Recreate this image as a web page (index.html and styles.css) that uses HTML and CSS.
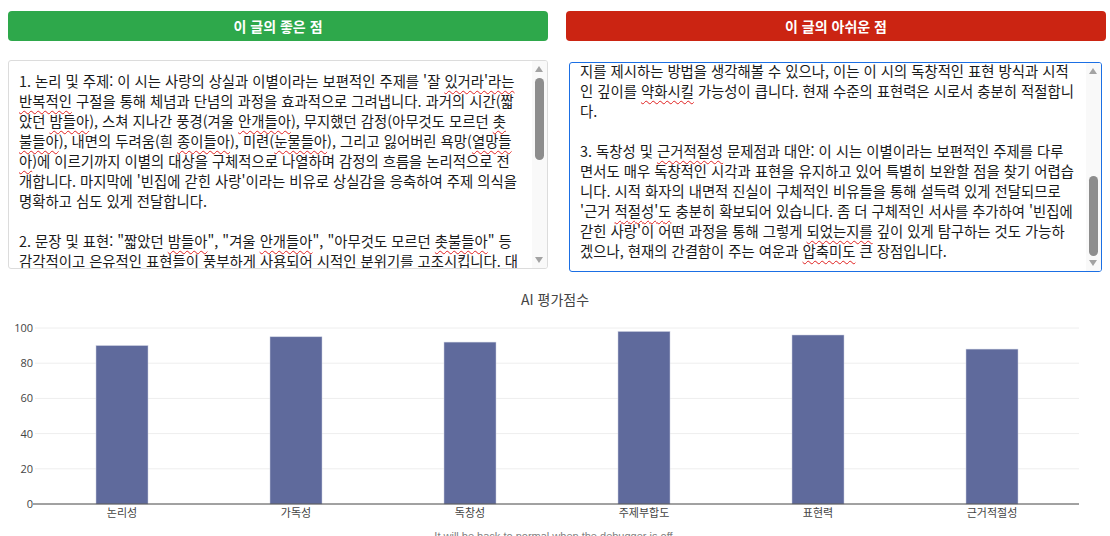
FILE: index.html
```html
<!DOCTYPE html>
<html lang="ko">
<head>
    <meta charset="UTF-8">
    <meta name="viewport" content="width=device-width, initial-scale=1.0">
    <title>AI 시 평가</title>
    <link rel="stylesheet" href="styles.css">
</head>
<body>

<div class="panels">
    <section class="panel">
        <div class="panel-head good">이 글의 좋은 점</div>
        <div class="feedback-box">
            <div class="feedback">1. 논리 및 주제: 이 시는 사랑의 상실과 이별이라는 보편적인 주제를 '잘 <span class="typo">있거라'라는</span> <span class="typo">반복적인</span> 구절을 통해 체념과 단념의 과정을 효과적으로 그려냅니다. 과거의 시간(짧았던 <span class="typo">밤들아</span>), 스쳐 지나간 풍경(겨울 <span class="typo">안개들아</span>), 무지했던 감정(아무것도 모르던 <span class="typo">촛불들아</span>), 내면의 두려움(흰 <span class="typo">종이들아</span>), 미련(<span class="typo">눈물들아</span>), 그리고 잃어버린 욕망(<span class="typo">열망들아</span>)에 이르기까지 이별의 대상을 구체적으로 나열하며 감정의 흐름을 논리적으로 전개합니다. 마지막에 '빈집에 갇힌 사랑'이라는 비유로 상실감을 응축하여 주제 의식을 명확하고 심도 있게 전달합니다.<br><br>2. 문장 및 표현: "짧았던 <span class="typo">밤들아</span>", "겨울 <span class="typo">안개들아</span>", "아무것도 모르던 <span class="typo">촛불들아</span>" 등 감각적이고 은유적인 표현들이 풍부하게 사용되어 시적인 분위기를 고조시킵니다. 대상에게 직접 말을 거는 호격 표현과 반복되는 문장 구조는 운율감을 형성하며, 화자의 절제된 어조 속에 깊은 슬픔을 효과적으로 담아냅니다.<br><br>3. 독창성: 이별이라는 익숙한 주제를 사물과 시간에 대한 작별 인사의 형식으로 풀어낸 점이 매우 독창적입니다. 특히 '빈집'이라는 공간에 사랑을 가두는 마지막 구절은 상실의 감정을 시각적이고 공간적인 이미지로 전환하여 독자에게 강렬한 인상을 남깁니다.<br><br>4. 근거 적절성: 각 시구에 등장하는 대상들은 화자가 떠나보내는 과거의 기억과 감정을 구체적으로 뒷받침하는 근거로 기능합니다. 나열된 이미지들이 모두 '빈집에 갇힌 사랑'이라는 결론으로 자연스럽게 수렴되어 설득력을 높여줍니다.</div>
            <div class="scrollbar">
                <span class="arrow up"></span>
                <span class="thumb"></span>
                <span class="arrow down"></span>
            </div>
        </div>
    </section>
    <section class="panel">
        <div class="panel-head bad">이 글의 아쉬운 점</div>
        <div class="feedback-box active">
            <div class="feedback" id="weak-points">1. 논리 및 주제 문제점과 대안: 이 시는 '잘 있거라'라는 반복 구절을 통해 이별의 정서를 일관되게 전달하고 있어 논리적 흐름에 큰 문제점은 보이지 않습니다. 다만 나열된 대상들 사이의 연결 고리가 다소 암시적이어서 일부 독자에게는 감정의 흐름이 갑작스럽게 느껴질 수 있습니다. 예를 들어 '짧았던 밤'에서 '흰 종이'로 넘어가는 과정에서 화자가 어떤 경험을 거쳤는지가 드러나지 않아 해석의 여지가 넓게 남습니다. 각 대상이 지닌 의미를 조금 더 드러내는 방식도 고려해볼 수 있으나, 이러한 생략과 여백이 오히려 독자의 상상력을 자극하며 현재의 절제된 구성 자체가 이 시의 가장 큰 매력이기도 합니다.<br><br>2. 문장 및 표현의 문제점과 대안: 감각적이고 은유적인 표현들이 풍부하게 사용되어 있어 표현상의 뚜렷한 결함은 찾기 어렵습니다. 다만 일부 시구에서 호격 표현이 반복되어 리듬이 다소 단조롭게 느껴질 수 있습니다. 이를 보완하기 위해 선명한 이미지를 제시하는 방법을 생각해볼 수 있으나, 이는 이 시의 독창적인 표현 방식과 시적인 깊이를 <span class="typo">약화시킬</span> 가능성이 큽니다. 현재 수준의 표현력은 시로서 충분히 적절합니다.<br><br>3. 독창성 및 <span class="typo">근거적절성</span> 문제점과 대안: 이 시는 이별이라는 보편적인 주제를 다루면서도 매우 독창적인 시각과 표현을 유지하고 있어 특별히 보완할 점을 찾기 어렵습니다. 시적 화자의 내면적 진실이 구체적인 비유들을 통해 설득력 있게 전달되므로 '근거 <span class="typo">적절성'도</span> 충분히 확보되어 있습니다. 좀 더 구체적인 서사를 추가하여 '빈집에 갇힌 사랑'이 어떤 과정을 통해 그렇게 <span class="typo">되었는지를</span> 깊이 있게 탐구하는 것도 가능하겠으나, 현재의 간결함이 주는 여운과 <span class="typo">압축미도</span> 큰 장점입니다.</div>
            <div class="scrollbar">
                <span class="arrow up"></span>
                <span class="thumb"></span>
                <span class="arrow down"></span>
            </div>
        </div>
    </section>
</div>

<div class="chart">
    <div class="chart-title">AI 평가점수</div>
    <svg class="plot" width="1110" height="210" viewBox="0 0 1110 210">
        <g class="grid">
            <line x1="35" y1="19" x2="1079" y2="19"/>
            <line x1="35" y1="54.2" x2="1079" y2="54.2"/>
            <line x1="35" y1="89.4" x2="1079" y2="89.4"/>
            <line x1="35" y1="124.6" x2="1079" y2="124.6"/>
            <line x1="35" y1="159.8" x2="1079" y2="159.8"/>
        </g>
        <g class="ticks" text-anchor="end">
            <text x="33" y="23">100</text>
            <text x="33" y="58.2">80</text>
            <text x="33" y="93.4">60</text>
            <text x="33" y="128.6">40</text>
            <text x="33" y="163.8">20</text>
            <text x="33" y="199">0</text>
        </g>
        <g class="bars">
            <rect x="96" y="36.6" width="52" height="158.4"/>
            <rect x="270" y="27.8" width="52" height="167.2"/>
            <rect x="444" y="33.1" width="52" height="161.9"/>
            <rect x="618" y="22.5" width="52" height="172.5"/>
            <rect x="792" y="26" width="52" height="169"/>
            <rect x="966" y="40.1" width="52" height="154.9"/>
        </g>
        <line class="axis" x1="33" y1="195" x2="1079" y2="195"/>
        <g class="ticks" text-anchor="middle">
            <text x="122" y="208">논리성</text>
            <text x="296" y="208">가독성</text>
            <text x="470" y="208">독창성</text>
            <text x="644" y="208">주제부합도</text>
            <text x="818" y="208">표현력</text>
            <text x="992" y="208">근거적절성</text>
        </g>
    </svg>
</div>

<p class="debug-note">It will be back to normal when the debugger is off.</p>

<script>
    let weakPoints = document.getElementById('weak-points');
    weakPoints.scrollTop = weakPoints.scrollHeight;

    // draw the scroll thumbs from the real scroll position
    document.querySelectorAll('.feedback-box').forEach(box => {
        let text = box.querySelector('.feedback');
        let thumb = box.querySelector('.thumb');
        let trackTop = 17;
        let trackLength = text.clientHeight - trackTop - 15;
        let thumbHeight = Math.round(trackLength * text.clientHeight / text.scrollHeight);
        let maxScroll = text.scrollHeight - text.clientHeight;
        let offset = maxScroll > 0 ? (trackLength - thumbHeight) * text.scrollTop / maxScroll : 0;
        thumb.style.top = (trackTop + Math.round(offset)) + 'px';
        thumb.style.height = thumbHeight + 'px';
    });
</script>

</body>
</html>
```

FILE: styles.css
```css
body {
    font-family: "Noto Sans CJK KR", "Noto Sans", sans-serif;
    margin: 0;
    padding: 0;
    background-color: white;
    color: #1a1a1a;
    overflow: hidden;
}
.panels {
    display: grid;
    grid-template-columns: 540px 540px;
    column-gap: 18px;
    padding: 11px 0 0 8px;
}
.panel-head {
    height: 30px;
    line-height: 30px;
    text-align: center;
    color: white;
    font-size: 14px;
    font-weight: bold;
    border-radius: 4px;
}
.good {
    background-color: #2ea84b;
}
.bad {
    background-color: #cb2412;
}
.feedback-box {
    position: relative;
    box-sizing: border-box;
    height: 209px;
    margin-top: 19px;
    border: 1px solid #dcdcdc;
    border-radius: 3px;
    overflow: hidden;
}
.feedback-box.active {
    height: 210px;
    margin: 21px 4px 0 3px;
    border-color: #1b6fe4;
}
.feedback {
    box-sizing: border-box;
    height: 100%;
    padding: 10px 28.1px 10px 10px;
    font-size: 14.39px;
    line-height: 20px;
    overflow-y: scroll;
}
.active .feedback {
    padding-right: 25px;
}
.scrollbar {
    position: absolute;
    top: 0;
    right: 0;
    bottom: 0;
    width: 15px;
    background-color: #f9f9f9;
}
.scrollbar .thumb {
    position: absolute;
    left: 3px;
    width: 9px;
    border-radius: 5px;
    background-color: #8d8d8d;
}
.scrollbar .arrow {
    position: absolute;
    left: 3px;
    width: 0;
    height: 0;
    border-left: 4.5px solid transparent;
    border-right: 4.5px solid transparent;
}
.scrollbar .up {
    top: 5px;
    border-bottom: 6px solid #a3a3a3;
}
.scrollbar .down {
    bottom: 5px;
    border-top: 6px solid #a3a3a3;
}
.typo {
    text-decoration: underline wavy #e02020;
    text-decoration-thickness: 1px;
    text-underline-offset: 3px;
}
.chart-title {
    margin-top: 17px;
    text-align: center;
    font-size: 14px;
    line-height: 20px;
    color: #444;
}
.plot {
    display: block;
}
.plot .grid line {
    stroke: #eeeeee;
    stroke-width: 1;
}
.plot .axis {
    stroke: #444;
    stroke-width: 1;
}
.plot .bars rect {
    fill: #5f6a9c;
    stroke: #c9cde0;
    stroke-width: 0.5;
}
.plot .ticks text {
    font-family: "Open Sans", "Noto Sans CJK KR", sans-serif;
    font-size: 11px;
    fill: #444;
}
.debug-note {
    margin: 10px 0 0 0;
    text-align: center;
    font-family: "Liberation Sans", Arial, sans-serif;
    font-size: 11px;
    line-height: 14px;
    color: #808080;
}
```
